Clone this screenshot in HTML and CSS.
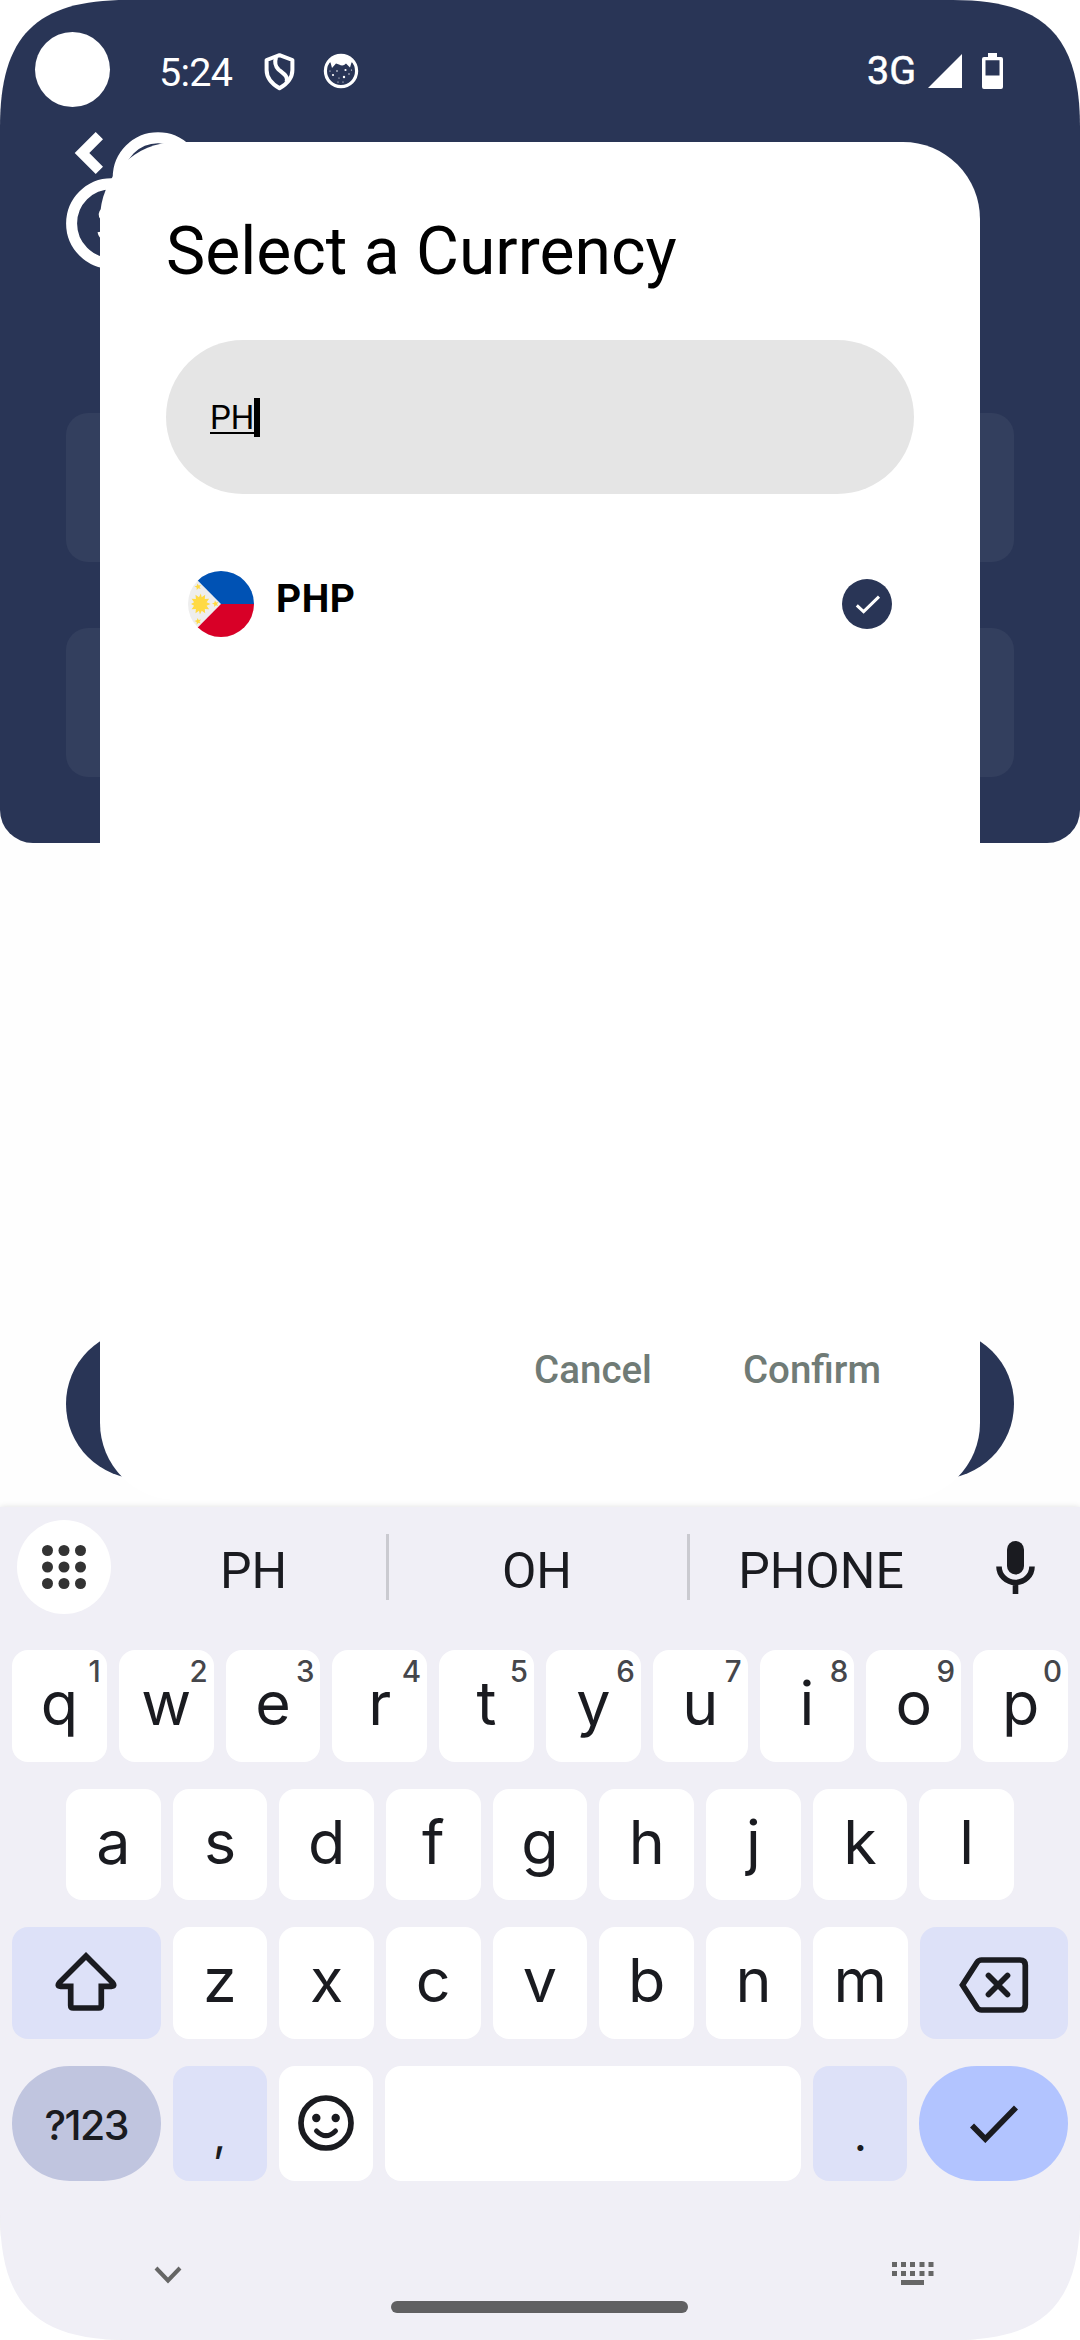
FILE: index.html
```html
<!DOCTYPE html>
<html lang="en">
<head>
<meta charset="utf-8">
<title>Select a Currency</title>
<link rel="stylesheet" href="styles.css">
</head>
<body>
<div class="device">
  <main class="app">
    <header class="hero">
      <div class="status">
        <span class="camera"></span>
        <span class="time">5:24</span>
        <svg class="shield" viewBox="0 0 31 38"><path d="M15.500 2.200L2.600 7V17C2.600 25 8 31 15.500 35.300C23 31 28.400 25 28.400 17V7Z"/><path d="M12 4.500C10.500 9 10.500 12.500 14.500 16.500C20 21 24.500 23.500 22.500 29"/></svg>
        <svg class="critter" viewBox="0 0 36 36"><circle cx="18" cy="18" r="15.600" fill="none" stroke="#fff" stroke-width="3.200"/><path d="M5 8.500C12-1 24-1 31 8.500L28.500 9.500L27 14.500L23 10.500Q20 14 16 11.500L13 10.500L9 15L7.500 9.500Z" fill="#fff"/><g fill="#fff"><circle cx="14" cy="18" r=".8"/><circle cx="22.500" cy="17" r="1.100"/><circle cx="10" cy="22" r="1.100"/><circle cx="21" cy="24" r="1.200"/><circle cx="16" cy="25" r=".6"/><circle cx="26" cy="21" r=".7"/><circle cx="15" cy="29" r=".6"/><circle cx="28.500" cy="17" r=".6"/><circle cx="7" cy="18" r=".6"/><circle cx="20" cy="29" r=".6"/></g></svg>
        <span class="network">3G</span>
        <svg class="signal" viewBox="0 0 34 34"><path d="M34 0V34H0Z"/></svg>
        <svg class="battery" viewBox="0 0 21 36"><path fill-rule="evenodd" d="M6 0H15V4H19Q21 4 21 6V34Q21 36 19 36H2Q0 36 0 34V6Q0 4 2 4H6ZM3.500 7.300V22.500H17.500V7.300Z"/></svg>
      </div>
      <svg class="hero-art" viewBox="0 0 250 160"><path d="M95.700 5L74.700 26L95.700 47L103 39.700L89.300 26L103 12.300Z" fill="#fff"/><g fill="none" stroke="#fff" stroke-width="11"><circle cx="158" cy="50.500" r="39.800"/><circle cx="111.400" cy="96.500" r="39.800"/></g><g fill="none" stroke="#fff" stroke-width="3"><path d="M103 82Q98 87 102 92M99 105Q100 110 104 112"/></g></svg>
      <div class="field"></div>
      <div class="field"></div>
    </header>
    <div class="submit"></div>
  </main>

  <section class="dialog">
    <h1>Select a Currency</h1>
    <div class="search"><span class="query">PH</span><i class="caret"></i></div>
    <div class="currency">
      <svg class="flag" viewBox="0 0 66 66"><defs><clipPath id="round"><circle cx="33" cy="33" r="33"/></clipPath></defs><g clip-path="url(#round)"><path fill="#eee" d="M0 0H66V66H0Z"/><path fill="#0052b4" d="M0-1L10 9.700L33 33H66V-1Z"/><path fill="#d80027" d="M0 67L10 56.300L33 33H66V67Z"/><path fill="#ffda44" d="M22.500 33L18.600 34.800L21.100 38.300L16.800 37.900L17.200 42.200L13.700 39.700L11.900 43.600L11 39.700L7.500 42.200L7.900 37.900L3.600 38.300L6.100 34.800L3 33L6.100 31.200L3.600 27.700L7.900 28.100L7.500 23.800L11 26.300L12.800 22.400L13.700 26.300L17.200 23.800L16.800 28.100L21.100 27.700L18.600 31.200Z"/><path id="star" fill="#ffda44" d="M9.500 12.500L10.700 14.500L13 14L11.500 16L12.700 18L10.400 17.300L8.700 19L8.700 16.500L6.500 15.500L8.800 14.700Z"/><use href="#star" y="34.500"/><use href="#star" x="17.500" y="17"/></g></svg>
      <span class="code">PHP</span>
      <svg class="selected" viewBox="0 0 50 50"><circle cx="25" cy="25" r="25"/><path d="M14.800 26.300L21.600 32.600L37 17.600"/></svg>
    </div>
    <footer class="actions"><span>Cancel</span><span>Confirm</span></footer>
  </section>

  <section class="keyboard">
    <div class="suggestions">
      <svg class="apps" viewBox="0 0 94 94"><circle cx="47" cy="47" r="47" fill="#fff"/><g fill="#333"><circle cx="30.500" cy="30.500" r="5.500"/><circle cx="47" cy="30.500" r="5.500"/><circle cx="63.500" cy="30.500" r="5.500"/><circle cx="30.500" cy="47" r="5.500"/><circle cx="47" cy="47" r="5.500"/><circle cx="63.500" cy="47" r="5.500"/><circle cx="30.500" cy="63.500" r="5.500"/><circle cx="47" cy="63.500" r="5.500"/><circle cx="63.500" cy="63.500" r="5.500"/></g></svg>
      <span class="word first">PH</span><i class="divider"></i>
      <span class="word second">OH</span><i class="divider"></i>
      <span class="word third">PHONE</span>
      <svg class="mic" viewBox="0 0 39 53"><rect x="11" y="0" width="17" height="33.500" rx="8.500" fill="#1a1b20"/><path d="M3 25.500A16.500 16 0 0 0 36 25.500M19.500 42V53" fill="none" stroke="#1a1b20" stroke-width="5.600"/></svg>
    </div>
    <div class="row">
      <span class="key">q<sup>1</sup></span><span class="key">w<sup>2</sup></span><span class="key">e<sup>3</sup></span><span class="key">r<sup>4</sup></span><span class="key">t<sup>5</sup></span><span class="key">y<sup>6</sup></span><span class="key">u<sup>7</sup></span><span class="key">i<sup>8</sup></span><span class="key">o<sup>9</sup></span><span class="key">p<sup>0</sup></span>
    </div>
    <div class="row middle">
      <span class="key">a</span><span class="key">s</span><span class="key">d</span><span class="key">f</span><span class="key">g</span><span class="key">h</span><span class="key">j</span><span class="key">k</span><span class="key">l</span>
    </div>
    <div class="row">
      <span class="key wide soft"><svg class="shift" viewBox="0 0 62 59"><path d="M31 4L57.300 30.300Q60.500 34.300 56.500 34.300H46.300V53.500Q46.300 56 43.800 56H18.200Q15.700 56 15.700 53.500V34.300H5.500Q1.500 34.300 4.700 30.300Z"/></svg></span>
      <span class="key">z</span><span class="key">x</span><span class="key">c</span><span class="key">v</span><span class="key">b</span><span class="key">n</span><span class="key">m</span>
      <span class="key wide soft"><svg class="erase" viewBox="0 0 70 56"><path d="M3.500 28L18 5.500Q19.700 3 22.500 3H61Q66.300 3 66.300 8.300V47.700Q66.300 53 61 53H22.500Q19.700 53 18 50.500Z"/><path stroke-linecap="round" d="M29.500 18.500L48.500 37.500M48.500 18.500L29.500 37.500"/></svg></span>
    </div>
    <div class="row last">
      <span class="key wide symbols">?123</span>
      <span class="key soft mark">,</span>
      <span class="key"><svg class="smile" viewBox="0 0 56 56"><circle cx="28" cy="28" r="25"/><circle class="eye" cx="18.300" cy="23" r="4.200"/><circle class="eye" cx="37.700" cy="23" r="4.200"/><path d="M18.500 36Q28 45.500 37.500 36"/></svg></span>
      <span class="key space"></span>
      <span class="key soft mark">.</span>
      <span class="key wide enter"><svg class="done" viewBox="0 0 48 38"><path d="M2 20.500L15.300 34L46 2.500"/></svg></span>
    </div>
    <div class="nav">
      <svg class="collapse" viewBox="0 0 28 18"><path d="M2 2L14 14.500L26 2"/></svg>
      <span class="home"></span>
      <svg class="switcher" viewBox="0 0 42 23"><path d="M0 0h5v5h-5zM9 0h5v5h-5zM18 0h5v5h-5zM27.500 0h5v5h-5zM36.500 0h5v5h-5zM0 9h5v5h-5zM9 9h5v5h-5zM18 9h5v5h-5zM27.500 9h5v5h-5zM36.500 9h5v5h-5zM9 18h23v5H9z"/></svg>
    </div>
  </section>
</div>
</body>
</html>
```
FILE: styles.css
```css
* { box-sizing: border-box; }
body { margin: 0; background: #fff; font-family: Roboto, sans-serif; }
svg { display: block; flex: none; }

.device {
  position: relative;
  display: flex;
  flex-direction: column;
  width: 1080px;
  height: 2340px;
  overflow: hidden;
  background: #fefefe;
  clip-path: path("M0 127C0 36 36 0 127 0H953C1044 0 1080 36 1080 127V2213C1080 2304 1044 2340 953 2340H127C36 2340 0 2304 0 2213Z");
}

/* Screen behind the dialog */
.app { height: 1507px; flex: none; }
.hero { height: 843px; background: #293556; border-radius: 0 0 33px 33px; }
.status { display: flex; align-items: flex-start; height: 127px; padding: 32px 77px 0 35px; color: #fff; }
.camera { width: 75px; height: 75px; border-radius: 50%; background: #fff; }
.time { width: 75px; margin: 19px 0 0 49px; font-size: 39.5px; line-height: 44px; letter-spacing: -.7px; }
.shield { width: 31px; height: 38px; margin: 21px 0 0 30px; fill: none; stroke: #fff; stroke-width: 4; stroke-linejoin: round; }
.critter { width: 36px; height: 36px; margin: 21px 0 0 28px; }
.network { width: 50px; margin: 17px 0 0 auto; font-size: 39.5px; line-height: 44px; font-weight: 400; -webkit-text-stroke: .5px #fff; }
.signal { width: 34px; height: 34px; margin: 22px 0 0 11px; fill: #fff; }
.battery { width: 21px; height: 36px; margin: 21px 0 0 20px; fill: #fff; }
.hero-art { width: 250px; height: 160px; margin-bottom: 126px; }
.field { height: 149px; margin: 0 66px 66px; border-radius: 22px; background: #333f5e; }
.submit { height: 150px; margin: 486px 66px 0; border-radius: 75px; background: #293556; }

/* Currency picker */
.dialog {
  position: absolute;
  left: 100px;
  top: 142px;
  display: flex;
  flex-direction: column;
  width: 880px;
  height: 1358px;
  padding: 66px;
  border-radius: 77px;
  background: #fff;
}
h1 { margin: 0; height: 132px; font-size: 66px; line-height: 88px; font-weight: 400; color: #000; white-space: nowrap; }
.search { display: flex; align-items: center; height: 154px; padding-left: 44px; border-radius: 77px; background: #e5e5e5; }
.query { height: 33px; border-bottom: 2px solid #000; font-size: 33px; line-height: 34px; color: #000; }
.caret { width: 6px; height: 39px; background: #000; }
.currency { display: flex; align-items: center; height: 66px; margin-top: 77px; padding: 0 22px; }
.flag { width: 66px; height: 66px; }
.code { margin: 0 auto 10px 22px; font-size: 39px; line-height: 48px; font-weight: 700; letter-spacing: .5px; color: #000; }
.selected { width: 50px; height: 50px; fill: #293556; }
.selected path { fill: none; stroke: #fff; stroke-width: 3; }
.actions { display: flex; justify-content: flex-end; gap: 91px; margin-top: auto; padding: 0 33px 41px 0; font-size: 38.5px; line-height: 46px; font-weight: 500; color: #707b76; }

/* Keyboard */
.keyboard { z-index: 1; display: flex; flex-direction: column; gap: 27px; height: 833px; background: #f0eff6; box-shadow: 0 0 6px rgba(0, 0, 0, .12); color: #1a1b20; }
.suggestions { display: flex; align-items: center; height: 116px; padding: 4px 45px 0 17px; font-size: 50px; }
.apps { width: 94px; height: 94px; }
.word { padding-top: 7px; text-align: center; line-height: 60px; }
.first { width: 275px; padding-left: 10px; }
.second { width: 298px; padding-right: 2px; }
.third { width: 265px; padding-right: 3px; }
.divider { width: 3px; height: 66px; background: #cacad0; }
.mic { width: 39px; height: 53px; margin-left: auto; }
.row { display: flex; gap: 12px; height: 111.700px; padding: 0 12px; flex: none; }
.middle { padding: 0 66px; }
.key { position: relative; display: flex; flex: 1 1 0; align-items: center; justify-content: center; padding-bottom: 6px; border-radius: 16px; background: #fff; font-family: Inter, sans-serif; font-size: 61px; line-height: 72px; }
.key sup { position: absolute; top: 3px; right: 6px; font-size: 29.5px; line-height: 36px; font-weight: 500; color: #45464b; }
.wide { flex: none; width: 148.500px; }
.soft { background: #dde1f8; }
.last { height: 115px; }
.symbols { border-radius: 58px; padding-bottom: 0; padding-top: 2px; background: #c0c5df; font-size: 41px; font-weight: 500; letter-spacing: -1.500px; }
.mark { padding: 20px 0 0; font-size: 46px; }
.space { flex: none; width: 416px; }
.enter { border-radius: 58px; background: #b2c4ff; }
.shift { width: 62px; height: 59px; margin-top: 3px; }
.erase { width: 70px; height: 56px; margin: 9px 0 0; }
.shift path, .erase path, .smile, .done path { fill: none; stroke: #1a1b20; stroke-width: 5.700; }
.smile { width: 56px; height: 56px; margin-top: 4px; stroke-linecap: round; }
.smile .eye { fill: #1a1b20; stroke: none; }
.smile path { stroke-width: 5; }
.done { width: 48px; height: 38px; margin-top: 6px; }
.nav { display: flex; align-items: flex-start; justify-content: space-between; padding: 54px 146px 0 154px; }
.collapse { width: 28px; height: 18px; margin-top: 4px; fill: none; stroke: #666; stroke-width: 4; }
.home { width: 297px; height: 12px; margin: 39px 0 0 5px; border-radius: 6px; background: #606062; }
.switcher { width: 42px; height: 23px; fill: #666; }
```
